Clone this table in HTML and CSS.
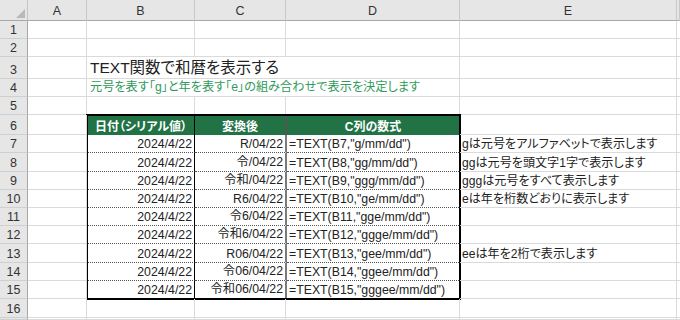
FILE: index.html
```html
<!DOCTYPE html>
<html lang="ja">
<head>
<meta charset="utf-8">
<title>TEXT関数で和暦を表示する</title>
<link rel="stylesheet" href="styles.css">
</head>
<body>
<div class="sheet">
  <div class="corner"><svg width="28" height="21" viewBox="0 0 28 21"><polygon points="25,9 25,18 16,18" fill="#b9b9b9"/></svg></div>
  <div class="ch">A</div><div class="ch">B</div><div class="ch">C</div><div class="ch">D</div><div class="ch">E</div><div class="ch ch-last"></div>

  <div class="rh">1</div><div class="c"></div><div class="c"></div><div class="c"></div><div class="c"></div><div class="c"></div><div class="c c-last"></div>
  <div class="rh">2</div><div class="c"></div><div class="c"></div><div class="c"></div><div class="c"></div><div class="c"></div><div class="c c-last"></div>
  <div class="rh">3</div><div class="c"></div><div class="c title span3">TEXT関数で和暦を表示する</div><div class="c"></div><div class="c c-last"></div>
  <div class="rh">4</div><div class="c"></div><div class="c subtitle span3">元号を表す「g」と年を表す「e」の組み合わせで表示を決定します</div><div class="c"></div><div class="c c-last"></div>
  <div class="rh">5</div><div class="c"></div><div class="c"></div><div class="c"></div><div class="c"></div><div class="c"></div><div class="c c-last"></div>

  <div class="table">
    <div class="th tb">日付（シリアル値）</div><div class="th tc">変換後</div><div class="th td">C列の数式</div>
    <div class="t tb num">2024/4/22</div><div class="t tc num">R/04/22</div><div class="t td">=TEXT(B7,"g/mm/dd")</div>
    <div class="t tb num">2024/4/22</div><div class="t tc num">令/04/22</div><div class="t td">=TEXT(B8,"gg/mm/dd")</div>
    <div class="t tb num">2024/4/22</div><div class="t tc num">令和/04/22</div><div class="t td">=TEXT(B9,"ggg/mm/dd")</div>
    <div class="t tb num">2024/4/22</div><div class="t tc num">R6/04/22</div><div class="t td">=TEXT(B10,"ge/mm/dd")</div>
    <div class="t tb num">2024/4/22</div><div class="t tc num">令6/04/22</div><div class="t td">=TEXT(B11,"gge/mm/dd")</div>
    <div class="t tb num">2024/4/22</div><div class="t tc num">令和6/04/22</div><div class="t td">=TEXT(B12,"ggge/mm/dd")</div>
    <div class="t tb num">2024/4/22</div><div class="t tc num">R06/04/22</div><div class="t td">=TEXT(B13,"gee/mm/dd")</div>
    <div class="t tb num">2024/4/22</div><div class="t tc num">令06/04/22</div><div class="t td">=TEXT(B14,"ggee/mm/dd")</div>
    <div class="t tb num last">2024/4/22</div><div class="t tc num last">令和06/04/22</div><div class="t td last">=TEXT(B15,"gggee/mm/dd")</div>
  </div>

  <div class="rh">6</div><div class="c"></div><div class="c"></div><div class="c c-last"></div>
  <div class="rh">7</div><div class="c"></div><div class="c note">gは元号をアルファベットで表示します</div><div class="c c-last"></div>
  <div class="rh">8</div><div class="c"></div><div class="c note">ggは元号を頭文字1字で表示します</div><div class="c c-last"></div>
  <div class="rh">9</div><div class="c"></div><div class="c note">gggは元号をすべて表示します</div><div class="c c-last"></div>
  <div class="rh">10</div><div class="c"></div><div class="c note">eは年を桁数どおりに表示します</div><div class="c c-last"></div>
  <div class="rh">11</div><div class="c"></div><div class="c"></div><div class="c c-last"></div>
  <div class="rh">12</div><div class="c"></div><div class="c"></div><div class="c c-last"></div>
  <div class="rh">13</div><div class="c"></div><div class="c note">eeは年を2桁で表示します</div><div class="c c-last"></div>
  <div class="rh">14</div><div class="c"></div><div class="c"></div><div class="c c-last"></div>
  <div class="rh">15</div><div class="c"></div><div class="c"></div><div class="c c-last"></div>

  <div class="rh">16</div><div class="c"></div><div class="c"></div><div class="c"></div><div class="c"></div><div class="c"></div><div class="c c-last"></div>
  <div class="rh"></div><div class="c"></div><div class="c"></div><div class="c"></div><div class="c"></div><div class="c"></div><div class="c c-last"></div>
</div>
</body>
</html>
```

FILE: styles.css
```css
* { box-sizing: border-box; }
html, body { margin: 0; padding: 0; background: #fff; }
body {
  width: 680px;
  height: 320px;
  overflow: hidden;
  font-family: "Liberation Sans", "Noto Sans CJK JP", sans-serif;
  font-feature-settings: "palt" 1;
  color: #222;
}
.sheet {
  display: grid;
  grid-template-columns: 28px 59px 108px 91px 174px 217px 3px;
  grid-template-rows: 21px 18px 18px 22px 18px 18px 20px 18px 19px 18px 18px 18px 18px 19px 18px 18px 19px 2px;
  height: 320px;
  overflow: hidden;
}
.corner {
  background: #e6e6e6;
  border-right: 1px solid #c4c4c4;
  border-bottom: 1px solid #a8a8a8;
}
.corner svg { display: block; }
.ch {
  background: #e6e6e6;
  border-right: 1px solid #c9c9c9;
  border-bottom: 1px solid #a8a8a8;
  font-size: 12.5px;
  color: #333;
  display: flex;
  align-items: flex-end;
  justify-content: center;
  padding-bottom: 2px;
}
.rh {
  background: #e6e6e6;
  border-right: 1px solid #a8a8a8;
  border-bottom: 1px solid #cfcfcf;
  font-size: 12.5px;
  color: #333;
  display: flex;
  align-items: flex-end;
  justify-content: center;
  padding-bottom: 1px;
}
.c {
  border-right: 1px solid #dadada;
  border-bottom: 1px solid #dadada;
  display: flex;
  align-items: flex-end;
  white-space: nowrap;
  font-size: 12.3px;
  padding: 0 2px 1px;
}
.c-last { border-right: none; }
.span3 { grid-column: span 3; }
.title {
  font-size: 15.5px;
  color: #222;
  padding-left: 3px;
  padding-bottom: 1px;
}
.subtitle {
  font-size: 12.2px;
  color: #2f9a5c;
  padding-left: 3px;
}
.note {
  font-size: 12.1px;
  color: #222;
  padding-left: 2px;
}
.table {
  grid-column: 3 / 6;
  grid-row: 7 / 17;
  border: 1px solid #000;
  box-shadow: 0 0 0 1px #000;
  display: grid;
  grid-template-columns: 107px 92px 1fr;
  grid-template-rows: 19px 18px 19px 18px 18px 18px 18px 19px 18px 17px;
  background: #fff;
}
.th {
  background: #217346;
  color: #fff;
  font-weight: bold;
  font-size: 12px;
  display: flex;
  align-items: center;
  justify-content: center;
  white-space: nowrap;
}
.t {
  font-size: 12.3px;
  display: flex;
  align-items: flex-end;
  padding: 0 2px 1px;
  white-space: nowrap;
  border-bottom: 1px dotted #555;
}
.t.last { border-bottom: none; }
.num { justify-content: flex-end; }
.tb { border-right: 1px solid #000; }
.tc { border-right: 2px solid #7a7a7a; }
.th.tb { border-right: 1px solid #000; }
.th.tc { border-right: 2px solid #555; }
```
